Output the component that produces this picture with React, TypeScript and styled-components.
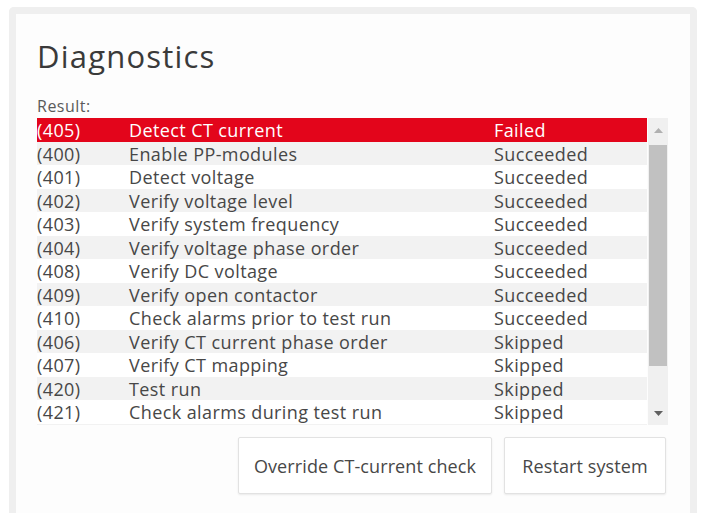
import React from 'react';
import styled, { createGlobalStyle } from 'styled-components';

type Status = 'Failed' | 'Succeeded' | 'Skipped';

interface Step {
  code: number;
  name: string;
  status: Status;
}

const steps: Step[] = [
  { code: 405, name: 'Detect CT current', status: 'Failed' },
  { code: 400, name: 'Enable PP-modules', status: 'Succeeded' },
  { code: 401, name: 'Detect voltage', status: 'Succeeded' },
  { code: 402, name: 'Verify voltage level', status: 'Succeeded' },
  { code: 403, name: 'Verify system frequency', status: 'Succeeded' },
  { code: 404, name: 'Verify voltage phase order', status: 'Succeeded' },
  { code: 408, name: 'Verify DC voltage', status: 'Succeeded' },
  { code: 409, name: 'Verify open contactor', status: 'Succeeded' },
  { code: 410, name: 'Check alarms prior to test run', status: 'Succeeded' },
  { code: 406, name: 'Verify CT current phase order', status: 'Skipped' },
  { code: 407, name: 'Verify CT mapping', status: 'Skipped' },
  { code: 420, name: 'Test run', status: 'Skipped' },
  { code: 421, name: 'Check alarms during test run', status: 'Skipped' },
  { code: 422, name: 'Shutdown', status: 'Skipped' },
];

const font = `'Open Sans', 'Liberation Sans', Arial, sans-serif`;

const GlobalStyle = createGlobalStyle`
  html, body {
    margin: 0;
    background: #ffffff;
  }
  body {
    font-family: ${font};
    color: #333333;
  }
`;

const Page = styled.div`
  padding: 7px 4px 0 9px;
  height: 513px;
  box-sizing: border-box;
  overflow: hidden;
`;

const Card = styled.div`
  border: 7px solid #efefef;
  border-bottom: none;
  border-radius: 5px 5px 0 0;
  background: #fdfdfd;
  padding: 21px 22px 0 21px;
  height: 506px;
  box-sizing: border-box;
`;

const Title = styled.h1`
  margin: 0 0 19px;
  font-size: 31px;
  font-weight: 400;
  letter-spacing: 1.2px;
  color: #3a3a3a;
  line-height: 42px;
`;

const Label = styled.div`
  font-size: 16px;
  letter-spacing: 0.5px;
  color: #5a5a5a;
  line-height: 20px;
  margin-bottom: 2px;
`;

const ListBox = styled.div`
  display: flex;
  height: 307px;
  overflow: hidden;
`;

const Rows = styled.div`
  flex: 1;
  overflow: hidden;
`;

const Row = styled.div<{ $failed?: boolean; $odd?: boolean }>`
  display: grid;
  grid-template-columns: 92px 365px 1fr;
  height: 23.5px;
  align-items: center;
  font-size: 18px;
  letter-spacing: 0.4px;
  font-weight: ${({ $failed }) => ($failed ? 500 : 400)};
  color: ${({ $failed }) => ($failed ? '#ffffff' : '#474747')};
  background: ${({ $failed, $odd }) =>
    $failed ? '#e3051b' : $odd ? '#f2f2f2' : '#ffffff'};
  white-space: nowrap;
`;

const ScrollBar = styled.div`
  width: 20px;
  margin-left: 1px;
  background: #f0f0f0;
  display: flex;
  flex-direction: column;
  align-items: center;
`;

const Arrow = styled.div`
  height: 24px;
  width: 100%;
  display: flex;
  align-items: center;
  justify-content: center;
`;

const Track = styled.div`
  flex: 1;
  width: 100%;
  display: flex;
  justify-content: center;
  padding-top: 3px;
`;

const Thumb = styled.div`
  width: 18px;
  height: 221px;
  background: #c1c1c1;
`;

const Actions = styled.div`
  display: flex;
  justify-content: flex-end;
  gap: 12px;
  margin-top: 12px;
  padding-right: 2px;
`;

const Button = styled.button<{ $width: number }>`
  width: ${({ $width }) => $width}px;
  height: 57px;
  background: #ffffff;
  border: 1px solid #e2e2e2;
  border-radius: 2px;
  box-shadow: 0 1px 2px rgba(0, 0, 0, 0.08);
  font-family: ${font};
  font-size: 18px;
  letter-spacing: 0.1px;
  color: #474747;
  cursor: pointer;
`;

const Caret = ({ up }: { up?: boolean }) => (
  <svg width="9" height="5" viewBox="0 0 9 5">
    <path d={up ? 'M0 5 L4.5 0 L9 5 Z' : 'M0 0 L4.5 5 L9 0 Z'} fill={up ? '#b0b0b0' : '#606060'} />
  </svg>
);

export default function App() {
  return (
    <Page>
      <GlobalStyle />
      <Card>
        <Title>Diagnostics</Title>
        <Label>Result:</Label>
        <ListBox>
          <Rows>
            {steps.map((step, i) => (
              <Row key={step.code} $failed={step.status === 'Failed'} $odd={i % 2 === 1}>
                <span>({step.code})</span>
                <span>{step.name}</span>
                <span>{step.status}</span>
              </Row>
            ))}
          </Rows>
          <ScrollBar>
            <Arrow>
              <Caret up />
            </Arrow>
            <Track>
              <Thumb />
            </Track>
            <Arrow>
              <Caret />
            </Arrow>
          </ScrollBar>
        </ListBox>
        <Actions>
          <Button $width={254}>Override CT-current check</Button>
          <Button $width={162}>Restart system</Button>
        </Actions>
      </Card>
    </Page>
  );
}
